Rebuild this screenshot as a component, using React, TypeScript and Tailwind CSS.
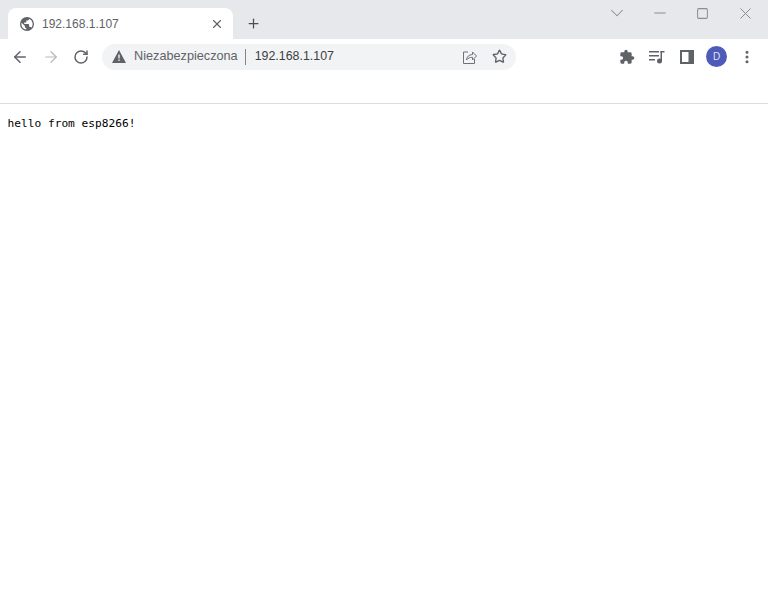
import { ArrowLeft, ArrowRight, RotateCw, X, Plus, Star, ChevronDown, Minus, Square, EllipsisVertical } from "lucide-react";

const Globe = () => (
  <svg width="14" height="14" viewBox="0 0 24 24" fill="#5f6368">
    <path d="M12 0a12 12 0 1 0 0 24 12 12 0 0 0 0-24zM10.800 21.500A9.600 9.600 0 0 1 2.400 12c0-.7.1-1.400.3-2.100L8.400 15.600v1.200c0 1.300 1.100 2.400 2.400 2.400v2.300zm8.300-3a2.400 2.400 0 0 0-2.300-1.700h-1.200v-3.600c0-.7-.5-1.200-1.200-1.200H7.200V9.600h2.400c.7 0 1.200-.5 1.200-1.200V6h2.400c1.300 0 2.400-1.100 2.400-2.400v-.5a9.600 9.600 0 0 1 3.500 15.400z" />
  </svg>
);

const Warning = () => (
  <svg width="14" height="13" viewBox="0 0 14 13" fill="#5f6368">
    <path d="M7 0 14 13H0z" />
    <rect x="6.300" y="4.500" width="1.400" height="4" fill="#f1f3f4" />
    <rect x="6.300" y="9.500" width="1.400" height="1.400" fill="#f1f3f4" />
  </svg>
);

const Share = () => (
  <svg width="16" height="16" viewBox="0 0 16 16" fill="none" stroke="#6f7377" strokeWidth="1">
    <path d="M6 3H1.500v11.500h11V10" />
    <path d="M4.500 11c.3-3.500 2.600-5.400 6-5.400V3l4 4-4 4V8.300c-2.600 0-4.600.8-6 2.700z" strokeLinejoin="round" />
  </svg>
);

const Puzzle = () => (
  <svg width="16" height="16" viewBox="0 0 24 24" fill="#5f6368">
    <path d="M20.500 11H19V7a2 2 0 0 0-2-2h-4V3.500a2.500 2.500 0 0 0-5 0V5H4a2 2 0 0 0-2 2v3.800h1.500a2.700 2.700 0 0 1 0 5.400H2V20a2 2 0 0 0 2 2h3.800v-1.500a2.700 2.700 0 0 1 5.400 0V22H17a2 2 0 0 0 2-2v-4h1.500a2.500 2.500 0 0 0 0-5z" />
  </svg>
);

const MediaQueue = () => (
  <svg width="16" height="14" viewBox="0 0 16 14" fill="#5f6368">
    <rect x="0" y="1" width="10" height="1.500" />
    <rect x="0" y="5" width="10" height="1.500" />
    <rect x="0" y="9" width="6" height="1.500" />
    <rect x="11.500" y="1" width="1.500" height="10" />
    <rect x="11.500" y="1" width="4" height="1.500" />
    <circle cx="10.500" cy="11" r="2.500" />
  </svg>
);

const SidePanel = () => (
  <svg width="14" height="14" viewBox="0 0 14 14" fill="none">
    <rect x="1" y="1" width="12" height="12" stroke="#5f6368" strokeWidth="2" />
    <rect x="8.500" y="1" width="4.500" height="12" fill="#5f6368" />
  </svg>
);

export default function App() {
  return (
    <div className="h-[606px] w-[768px] overflow-hidden bg-white font-['Liberation_Sans',sans-serif]">
      {/* Tab strip */}
      <div className="flex h-[39px] items-end bg-[#e6e8eb] pl-2">
        <div className="flex h-[31px] w-[225px] items-center rounded-t-lg bg-white pl-[12px] pr-[9px]">
          <Globe />
          <span className="ml-2 text-[12px] text-[#5f6368]">192.168.1.107</span>
          <X className="ml-auto text-[#5f6368]" size={14} strokeWidth={2} />
        </div>
        <div className="ml-[13px] flex h-[31px] items-center">
          <Plus className="text-[#4b4e52]" size={15} strokeWidth={2} />
        </div>
        {/* Window controls */}
        <div className="ml-auto flex h-[26px] items-center self-start pr-px text-[#8b8d90]">
          <div className="flex w-[43px] justify-center"><ChevronDown size={22} strokeWidth={1.1} /></div>
          <div className="flex w-[43px] justify-center"><Minus size={18} strokeWidth={1.33} /></div>
          <div className="flex w-[43px] justify-center"><Square size={13} strokeWidth={1.85} /></div>
          <div className="flex w-[43px] justify-center"><X size={19} strokeWidth={1.26} /></div>
        </div>
      </div>

      {/* Toolbar */}
      <div className="flex h-[35px] items-center pl-[11px]">
        <ArrowLeft className="text-[#5f6368]" size={18} strokeWidth={2} />
        <ArrowRight className="ml-[13px] text-[#b5b7ba]" size={18} strokeWidth={1.6} />
        <RotateCw className="ml-[13px] text-[#5f6368]" size={16} strokeWidth={2.2} />
        <div className="ml-[13px] flex h-[26px] w-[414px] items-center rounded-full bg-[#f1f3f4] pl-[10px] pr-[9px]">
          <Warning />
          <span className="ml-[8px] text-[12.7px] text-[#5f6368]">Niezabezpieczona</span>
          <span className="ml-[7px] h-[16px] w-px bg-[#80868b]" />
          <span className="ml-[9px] text-[12.4px] text-[#3c4043]">192.168.1.107</span>
          <span className="ml-auto flex items-center gap-[14px]">
            <Share />
            <Star className="text-[#5f6368]" size={15} strokeWidth={2.2} />
          </span>
        </div>
        <div className="ml-[103px] flex items-center">
          <Puzzle />
          <span className="ml-[14px]"><MediaQueue /></span>
          <span className="ml-[15px]"><SidePanel /></span>
          <span className="ml-[12px] flex h-[21px] w-[21px] items-center justify-center rounded-full bg-[#4f5bb8] text-[10px] text-[#dfe3f7]">D</span>
          <EllipsisVertical className="ml-[12px] text-[#5f6368]" size={16} strokeWidth={2.6} />
        </div>
      </div>

      {/* Empty bookmarks area */}
      <div className="h-[30px] border-b border-[#dadce0]" />

      <pre className="pl-[7.5px] pt-[13px] font-['DejaVu_Sans_Mono',monospace] text-[11.2px] leading-[14px] text-black">hello from esp8266!</pre>
    </div>
  );
}
